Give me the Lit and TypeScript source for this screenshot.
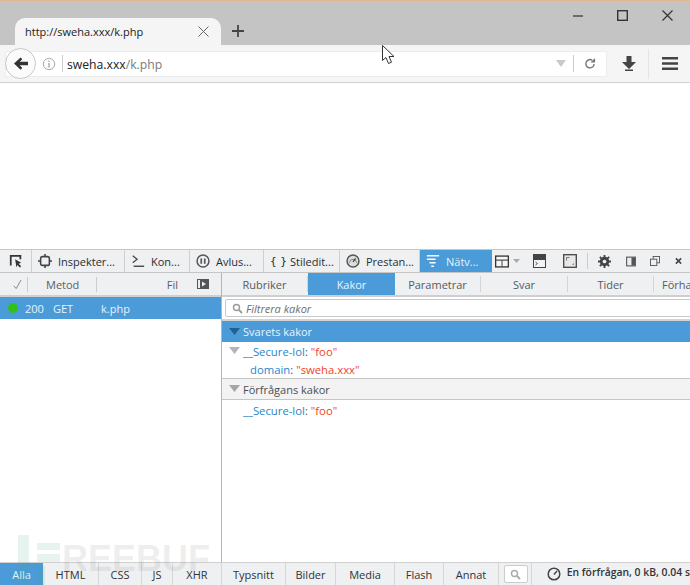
import { LitElement, html, css, svg } from "lit";
import { customElement } from "lit/decorators.js";

const toolTabs: [string, number, string, boolean][] = [
  ["", 32, "pick", false],
  ["Inspekter...", 93, "insp", false],
  ["Kon...", 65, "cons", false],
  ["Avlus...", 74, "dbg", false],
  ["Stiledit...", 76, "style", false],
  ["Prestan...", 80, "perf", false],
  ["Nätv...", 72, "net", true],
];

const toolIcons: Record<string, unknown> = {
  pick: svg`<path d="M2 13V2h11v4" fill="none" stroke="#333" stroke-width="2"/><path d="M7 6l7 4-3 1 3 3-1.500 1.500-3-3-1 3z" fill="#333"/>`,
  insp: svg`<rect x="3" y="3" width="10" height="10" rx="2" fill="none" stroke="#444" stroke-width="1.800"/><path d="M8 0v3M8 13v3M0 8h3M13 8h3" stroke="#444" stroke-width="1.800"/>`,
  cons: svg`<path d="M2 2l5 4-5 4" fill="none" stroke="#444" stroke-width="1.400"/><path d="M3 14h12" stroke="#444" stroke-width="1.600"/>`,
  dbg: svg`<circle cx="8" cy="8" r="6.800" fill="none" stroke="#555" stroke-width="1.700"/><path d="M6 5v6M10 5v6" stroke="#555" stroke-width="1.900"/>`,
  perf: svg`<circle cx="8" cy="8" r="6.800" fill="#ddd" stroke="#555" stroke-width="1.700"/><path d="M4 10a4 4 0 0 1 8 0" fill="none" stroke="#777"/><path d="M8 9l3-4" stroke="#444" stroke-width="1.400"/>`,
  net: svg`<path d="M1 3h14M1 7h10M4 11h7M6 15h3" stroke="#fff" stroke-width="1.600" transform="translate(0 -1)"/>`,
};

const reqTabs: [string, number, boolean][] = [
  ["Rubriker", 86, false],
  ["Kakor", 87, true],
  ["Parametrar", 86, false],
  ["Svar", 87, false],
  ["Tider", 86, false],
  ["Förha", 47, false],
];

const filters: [string, number, boolean][] = [
  ["Alla", 43, true],
  ["HTML", 56, false],
  ["CSS", 43, false],
  ["JS", 31, false],
  ["XHR", 49, false],
  ["Typsnitt", 64, false],
  ["Bilder", 50, false],
  ["Media", 59, false],
  ["Flash", 49, false],
  ["Annat", 55, false],
];

@customElement("app-root")
export class AppRoot extends LitElement {
  static styles = css`
    :host {
      display: flex;
      flex-direction: column;
      position: relative;
      width: 690px;
      height: 585px;
      overflow: hidden;
      background: #fff;
      font-family: "Open Sans", "Noto Sans", sans-serif;
      font-size: 11px;
      color: #3a3f45;
    }
    svg { display: block; flex: none; }
    .titlebar {
      height: 44px;
      flex: none;
      background: #c4c4c4;
      border-top: 1px solid #e0b88e;
      display: flex;
      align-items: flex-end;
      padding-left: 15px;
    }
    .tab {
      width: 206px;
      height: 27px;
      box-sizing: border-box;
      background: #f5f5f5;
      border-radius: 10px 10px 0 0;
      display: flex;
      align-items: center;
      padding: 0 12px 0 10px;
      color: #222;
      font-size: 11px;
      justify-content: space-between;
    }
    .plus { margin: 0 0 8px 11px; }
    .spacer { flex: 1; }
    .winbtns {
      align-self: flex-start;
      display: flex;
      gap: 34px;
      padding: 9px 17px 0 0;
      align-items: center;
    }
    .navbar {
      height: 37px;
      flex: none;
      background: #f5f5f5;
      display: flex;
      align-items: center;
      border-bottom: 1px solid #cfcfcf;
      position: relative;
      padding-left: 5px;
    }
    .urlbar {
      width: 602px;
      height: 26px;
      box-sizing: border-box;
      background: #fff;
      border: 1px solid #ececec;
      border-radius: 0 2px 2px 0;
      display: flex;
      align-items: center;
      padding-left: 33px;
      font-size: 12.2px;
      color: #222;
    }
    .urltext { position: relative; top: 1px; }
    .back {
      position: absolute;
      left: 5px;
      top: 3px;
      width: 31px;
      height: 31px;
      box-sizing: border-box;
      border-radius: 50%;
      border: 1px solid #c8c8c8;
      background: #fbfbfb;
      display: flex;
      align-items: center;
      justify-content: center;
    }
    .sep { width: 1px; height: 17px; background: #ccc; flex: none; }
    .sep.a { margin: 0 4px 0 6px; }
    .sep.b { margin: 0 10px 0 7px; }
    .path { color: #7a7a7a; }
    .navright { display: flex; align-items: center; flex: 1; padding-left: 15px; }
    .navsep { width: 1px; height: 30px; background: #e4e4e4; margin: 0 13px 0 12px; }
    .page { height: 166px; flex: none; background: #fff; }
    .toolbar {
      height: 24px;
      box-sizing: border-box;
      flex: none;
      background: #eef0f2;
      border-top: 1px solid #c6c6c6;
      border-bottom: 1px solid #c6c6c6;
      display: flex;
      color: #2a2e33;
      font-size: 11px;
    }
    .ttab {
      box-sizing: border-box;
      display: flex;
      align-items: center;
      gap: 6px;
      padding-left: 6px;
      border-right: 1px solid #cfcfcf;
      white-space: nowrap;
      overflow: hidden;
    }
    .ttab.active { background: #4a9bd8; color: #e6f2fb; border-right: 0; }
    .ttab.iconly { padding-left: 9px; }
    .stylei { font-family: "DejaVu Sans Mono", monospace; font-size: 11px; width: 14px; word-spacing: -3px; white-space: pre; }
    .ticons { flex: 1; display: flex; align-items: center; padding-left: 3px; }
    .ticons .vsep { width: 1px; height: 16px; background: #ccc; margin-left: 10px; }
    .m4 { margin-left: 4px; }
    .m10 { margin-left: 10px; }
    .m13 { margin-left: 13px; }
    .m14 { margin-left: 14px; }
    .m15 { margin-left: 15px; }
    .m17 { margin-left: 17px; }
    .body { flex: 1; display: flex; min-height: 0; }
    .left { width: 221px; flex: none; border-right: 1px solid #b5b5b5; }
    .right { flex: 1; min-width: 0; display: flex; flex-direction: column; overflow: hidden; }
    .lhead {
      height: 24px;
      box-sizing: border-box;
      background: #eef0f2;
      border-bottom: 2px solid #cfcfcf;
      display: flex;
      align-items: center;
      font-size: 11px;
      color: #5a5f66;
    }
    .lhead span { display: flex; align-items: center; height: 15px; }
    .hcheck { width: 28px; justify-content: center; border-right: 1px solid #ccc; box-sizing: border-box; padding-left: 7px; }
    .hmethod { width: 69px; padding-left: 18px; box-sizing: border-box; border-right: 1px solid #ccc; }
    .hfile { width: 81px; justify-content: flex-end; }
    .hicon { margin-left: 19px; }
    .reqrow {
      height: 22px;
      background: #4a9bd8;
      color: #e8f3fb;
      display: flex;
      align-items: center;
      font-size: 11px;
    }
    .dot { width: 10px; height: 10px; border-radius: 50%; background: #2fc11a; margin-left: 8px; flex: none; }
    .status { margin-left: 7px; width: 28px; }
    .method { width: 48px; }
    .rtabs {
      height: 24px;
      box-sizing: border-box;
      flex: none;
      background: #eef0f2;
      border-bottom: 2px solid #cfcfcf;
      display: flex;
      align-items: stretch;
      font-size: 11px;
      color: #555a60;
      width: 480px;
    }
    .rtab {
      flex: none;
      box-sizing: border-box;
      display: flex;
      align-items: center;
      justify-content: center;
      border-right: 1px solid #d4d4d4;
      margin-top: 3px;
      margin-bottom: 3px;
    }
    .rtab.active { background: #4a9bd8; color: #eaf4fb; margin: 0; border-right: 0; }
    .rtab.last { justify-content: flex-start; padding-left: 8px; border: 0; }
    .filter {
      height: 24px;
      flex: none;
      box-sizing: border-box;
      padding: 2px 0 2px 3px;
      border-bottom: 2px solid #d4d4d4;
    }
    .finput {
      height: 18px;
      width: 480px;
      box-sizing: border-box;
      border: 1px solid #c8c8c8;
      border-radius: 2px;
      display: flex;
      align-items: center;
      gap: 3px;
      padding-left: 6px;
      font-style: italic;
      color: #6a6f74;
      font-size: 11px;
    }
    .sect {
      flex: none;
      display: flex;
      align-items: center;
      gap: 3px;
      padding-left: 7px;
      font-size: 11px;
      box-sizing: border-box;
    }
    .sect.sel { background: #4a9bd8; color: #e8f3fb; height: 21px; }
    .sect.plain { height: 22px; background: #f3f3f3; border-top: 1px solid #c6c6c6; border-bottom: 1px solid #c6c6c6; color: #4a4f55; }
    .kv {
      height: 18px;
      display: flex;
      align-items: center;
      font-size: 11.3px;
      flex: none;
      white-space: pre;
    }
    .k { color: #1f85cc; }
    .c { color: #555; }
    .v { color: #f0431c; }
    .l1 { padding-left: 21px; margin-top: 1px; }
    .l2 { padding-left: 28px; }
    .first { padding-left: 7px; gap: 3px; }
    .bottom {
      height: 23px;
      box-sizing: border-box;
      flex: none;
      background: #eef0f2;
      border-top: 1px solid #cfcfcf;
      display: flex;
      align-items: stretch;
      font-size: 11px;
      color: #2f3338;
    }
    .fb {
      flex: none;
      box-sizing: border-box;
      display: flex;
      align-items: center;
      justify-content: center;
      border-right: 1px solid #d6d6d6;
    }
    .fb.active { background: #4a9bd8; color: #e8f3fb; border-right: 0; }
    .search {
      width: 28px;
      height: 18px;
      box-sizing: border-box;
      margin: 2px 3px 0 5px;
      background: #fff;
      border: 1px solid #ccc;
      border-radius: 2px;
      display: flex;
      align-items: center;
      justify-content: center;
    }
    .bsep { width: 1px; background: #d6d6d6; }
    .summary {
      display: flex;
      align-items: center;
      gap: 6px;
      padding-left: 15px;
      white-space: nowrap;
      font-weight: 600;
      font-size: 10.4px;
      color: #333;
    }
    .sumtext { position: relative; top: -2px; }
    .watermark {
      position: absolute;
      left: 62px;
      top: 541px;
      font-family: "Liberation Sans", sans-serif;
      font-weight: 700;
      font-size: 36px;
      line-height: 36px;
      color: rgba(120, 120, 120, 0.13);
      pointer-events: none;
    }
    .wmlogo { position: absolute; left: 18px; top: 535px; pointer-events: none; }
    .cursor { position: absolute; left: 382px; top: 45px; }
  `;

  private mag(c = "#999") {
    return html`<svg width="11" height="11" viewBox="0 0 11 11"><circle cx="4.500" cy="4.500" r="3" fill="none" stroke=${c} stroke-width="1.400"/><path d="M7 7l3 3" stroke=${c} stroke-width="1.800"/></svg>`;
  }

  private tri(c: string) {
    return html`<svg width="11" height="8" viewBox="0 0 11 8"><path d="M0 0h11L5.500 7z" fill=${c}/></svg>`;
  }

  render() {
    return html`
      <div class="titlebar">
        <div class="tab">
          <span>http://sweha.xxx/k.php</span>
          <svg width="11" height="11" viewBox="0 0 11 11"><path d="M.5.5l10 10M10.500.5l-10 10" stroke="#666" stroke-width="1"/></svg>
        </div>
        <svg class="plus" width="12" height="12" viewBox="0 0 12 12"><path d="M6 0v12M0 6h12" stroke="#444" stroke-width="1.800"/></svg>
        <div class="spacer"></div>
        <div class="winbtns">
          <svg width="10" height="10" viewBox="0 0 10 10"><path d="M0 5h10" stroke="#333" stroke-width="1.200"/></svg>
          <svg width="11" height="11" viewBox="0 0 11 11"><rect x=".7" y=".7" width="9.600" height="9.600" fill="none" stroke="#333" stroke-width="1.400"/></svg>
          <svg width="11" height="11" viewBox="0 0 11 11"><path d="M.5.5l10 10M10.500.5l-10 10" stroke="#333" stroke-width="1.200"/></svg>
        </div>
      </div>
      <div class="navbar">
        <div class="urlbar">
          <svg width="14" height="14" viewBox="0 0 14 14" style="margin-left:3px"><circle cx="7" cy="7" r="5.700" fill="none" stroke="#aaa"/><path d="M7 6v4.500M7 3.500v1.500" stroke="#999" stroke-width="1.200"/></svg>
          <div class="sep a"></div>
          <span class="urltext">sweha.xxx<span class="path">/k.php</span></span>
          <div class="spacer"></div>
          <svg width="10" height="7" viewBox="0 0 10 7"><path d="M0 0h10L5 7z" fill="#c9c9c9"/></svg>
          <div class="sep b"></div>
          <svg width="12" height="13" viewBox="0 0 13 13" style="margin-right:10px"><path d="M11 7a4.500 4.500 0 1 1-2-4" fill="none" stroke="#777" stroke-width="1.500"/><path d="M12 .5v5H7z" fill="#777"/></svg>
        </div>
        <div class="navright">
          <svg width="14" height="15" viewBox="0 0 14 15"><path d="M4.500 0h5v6H14l-7 7-7-7h4.500zM3 13.500h8V15H3z" fill="#444"/></svg>
          <div class="navsep"></div>
          <svg width="16" height="13" viewBox="0 0 16 13"><path d="M0 1.250h16M0 6.500h16M0 11.750h16" stroke="#444" stroke-width="2.500"/></svg>
        </div>
        <div class="back">
          <svg width="14" height="13" viewBox="0 0 16 14"><path d="M7.500 0L9.500 2 6.500 5H16V9H6.500L9.500 12 7.500 14 0 7z" fill="#333"/></svg>
        </div>
      </div>
      <div class="page"></div>
      <div class="toolbar">
        ${toolTabs.map(
          ([label, w, ic, active]) => html`
            <div class="ttab ${active ? "active" : ""} ${label ? "" : "iconly"}" style="width:${w}px">
              ${ic === "style"
                ? html`<span class="stylei">{ }</span>`
                : html`<svg width="14" height="14" viewBox="0 0 16 16">${toolIcons[ic]}</svg>`}
              ${label ? html`<span>${label}</span>` : ""}
            </div>
          `,
        )}
        <div class="ticons">
          <svg width="14" height="13" viewBox="0 0 15 13"><rect x=".7" y=".7" width="13.600" height="11.600" fill="#f6f6f6" stroke="#333" stroke-width="1.400"/><path d="M1 5h13M7.500 5v7" stroke="#555" stroke-width="1.200"/></svg>
          <svg class="m4" width="7" height="4" viewBox="0 0 7 4"><path d="M0 0h7L3.500 4z" fill="#aaa"/></svg>
          <svg class="m13" width="13" height="14" viewBox="0 0 13 14"><rect width="13" height="14" fill="#444"/><rect x="1" y="6" width="11" height="7" fill="#f4f4f4"/><path d="M2.500 8l2 1.500-2 1.500" fill="none" stroke="#444" stroke-width=".9"/></svg>
          <svg class="m17" width="14" height="14" viewBox="0 0 14 14"><rect x=".7" y=".7" width="12.600" height="12.600" fill="#e8e8e8" stroke="#444" stroke-width="1.300"/><path d="M3.500 3.500h3M3.500 3.500v3M10.500 10.500h-1M10.500 10.500v-1" stroke="#777"/></svg>
          <div class="vsep"></div>
          <svg class="m10" width="13" height="13" viewBox="0 0 14 14"><circle cx="7" cy="7" r="3.800" fill="none" stroke="#444" stroke-width="2.600"/><path d="M7 0v14M0 7h14M2 2l10 10M12 2L2 12" stroke="#444" stroke-width="2"/><circle cx="7" cy="7" r="2" fill="#eef0f2"/></svg>
          <svg class="m15" width="10" height="11" viewBox="0 0 11 11"><rect x=".7" y=".7" width="9.600" height="9.600" fill="#eee" stroke="#555" stroke-width="1.200"/><rect x="6" y="1" width="4" height="9" fill="#555"/></svg>
          <svg class="m14" width="10" height="10" viewBox="0 0 11 11"><rect x="3.500" y=".5" width="7" height="7" fill="none" stroke="#555"/><rect x=".5" y="3.500" width="7" height="7" fill="#eef0f2" stroke="#555"/></svg>
          <svg class="m15" width="7" height="8" viewBox="0 0 8 8"><path d="M1 1l6 6M7 1L1 7" stroke="#444" stroke-width="1.800"/></svg>
        </div>
      </div>
      <div class="body">
        <div class="left">
          <div class="lhead">
            <span class="hcheck"><svg width="9" height="11" viewBox="0 0 10 11"><path d="M1 7l2.500 3L9 .5" fill="none" stroke="#888" stroke-width="1.100"/></svg></span>
            <span class="hmethod">Metod</span>
            <span class="hfile">Fil</span>
            <svg class="hicon" width="12" height="10" viewBox="0 0 12 10"><rect width="12" height="10" fill="#555"/><rect x="1" y="1" width="2" height="8" fill="#eee"/><path d="M5 2.500l4 2.500-4 2.500z" fill="#eee"/></svg>
          </div>
          <div class="reqrow">
            <div class="dot"></div>
            <span class="status">200</span>
            <span class="method">GET</span>
            <span>k.php</span>
          </div>
        </div>
        <div class="right">
          <div class="rtabs">
            ${reqTabs.map(
              ([t, w, active], i) => html`<div class="rtab ${active ? "active" : ""} ${i === 5 ? "last" : ""}" style="width:${w}px">${t}</div>`,
            )}
          </div>
          <div class="filter">
            <div class="finput">${this.mag()}<span>Filtrera kakor</span></div>
          </div>
          <div class="sect sel">${this.tri("#24608f")}<span>Svarets kakor</span></div>
          <div class="kv first">${this.tri("#b5b5b5")}<span><span class="k">__Secure-lol</span><span class="c">: </span><span class="v">"foo"</span></span></div>
          <div class="kv l2"><span class="k">domain</span><span class="c">: </span><span class="v">"sweha.xxx"</span></div>
          <div class="sect plain">${this.tri("#a5a5a5")}<span>Förfrågans kakor</span></div>
          <div class="kv l1"><span class="k">__Secure-lol</span><span class="c">: </span><span class="v">"foo"</span></div>
        </div>
      </div>
      <div class="bottom">
        ${filters.map(
          ([t, w, active]) => html`<div class="fb ${active ? "active" : ""}" style="width:${w}px">${t}</div>`,
        )}
        <div class="search">${this.mag("#aaa")}</div>
        <div class="bsep"></div>
        <div class="summary">
          <svg width="14" height="14" viewBox="0 0 14 14"><circle cx="7" cy="7" r="5.800" fill="none" stroke="#444" stroke-width="1.500"/><path d="M7 7.500l3-3.500" stroke="#444" stroke-width="1.400"/></svg>
          <span class="sumtext">En förfrågan, 0 kB, 0.04 s</span>
        </div>
      </div>
      <svg class="wmlogo" width="43" height="50" viewBox="0 0 43 50"><path d="M0 0h11v50H0zM19 8h23v7H19zM19 19h23v8H19zM19 31h8v19h-8z" fill="rgba(70,160,120,0.13)"/></svg>
      <div class="watermark">REEBUF</div>
      <svg class="cursor" width="14" height="20" viewBox="0 0 14 20"><path d="M.5.500v15l3.500-3 2.500 6 3-1.300-2.500-5.700h5z" fill="#fff" stroke="#333" stroke-width="1"/></svg>
    `;
  }
}
